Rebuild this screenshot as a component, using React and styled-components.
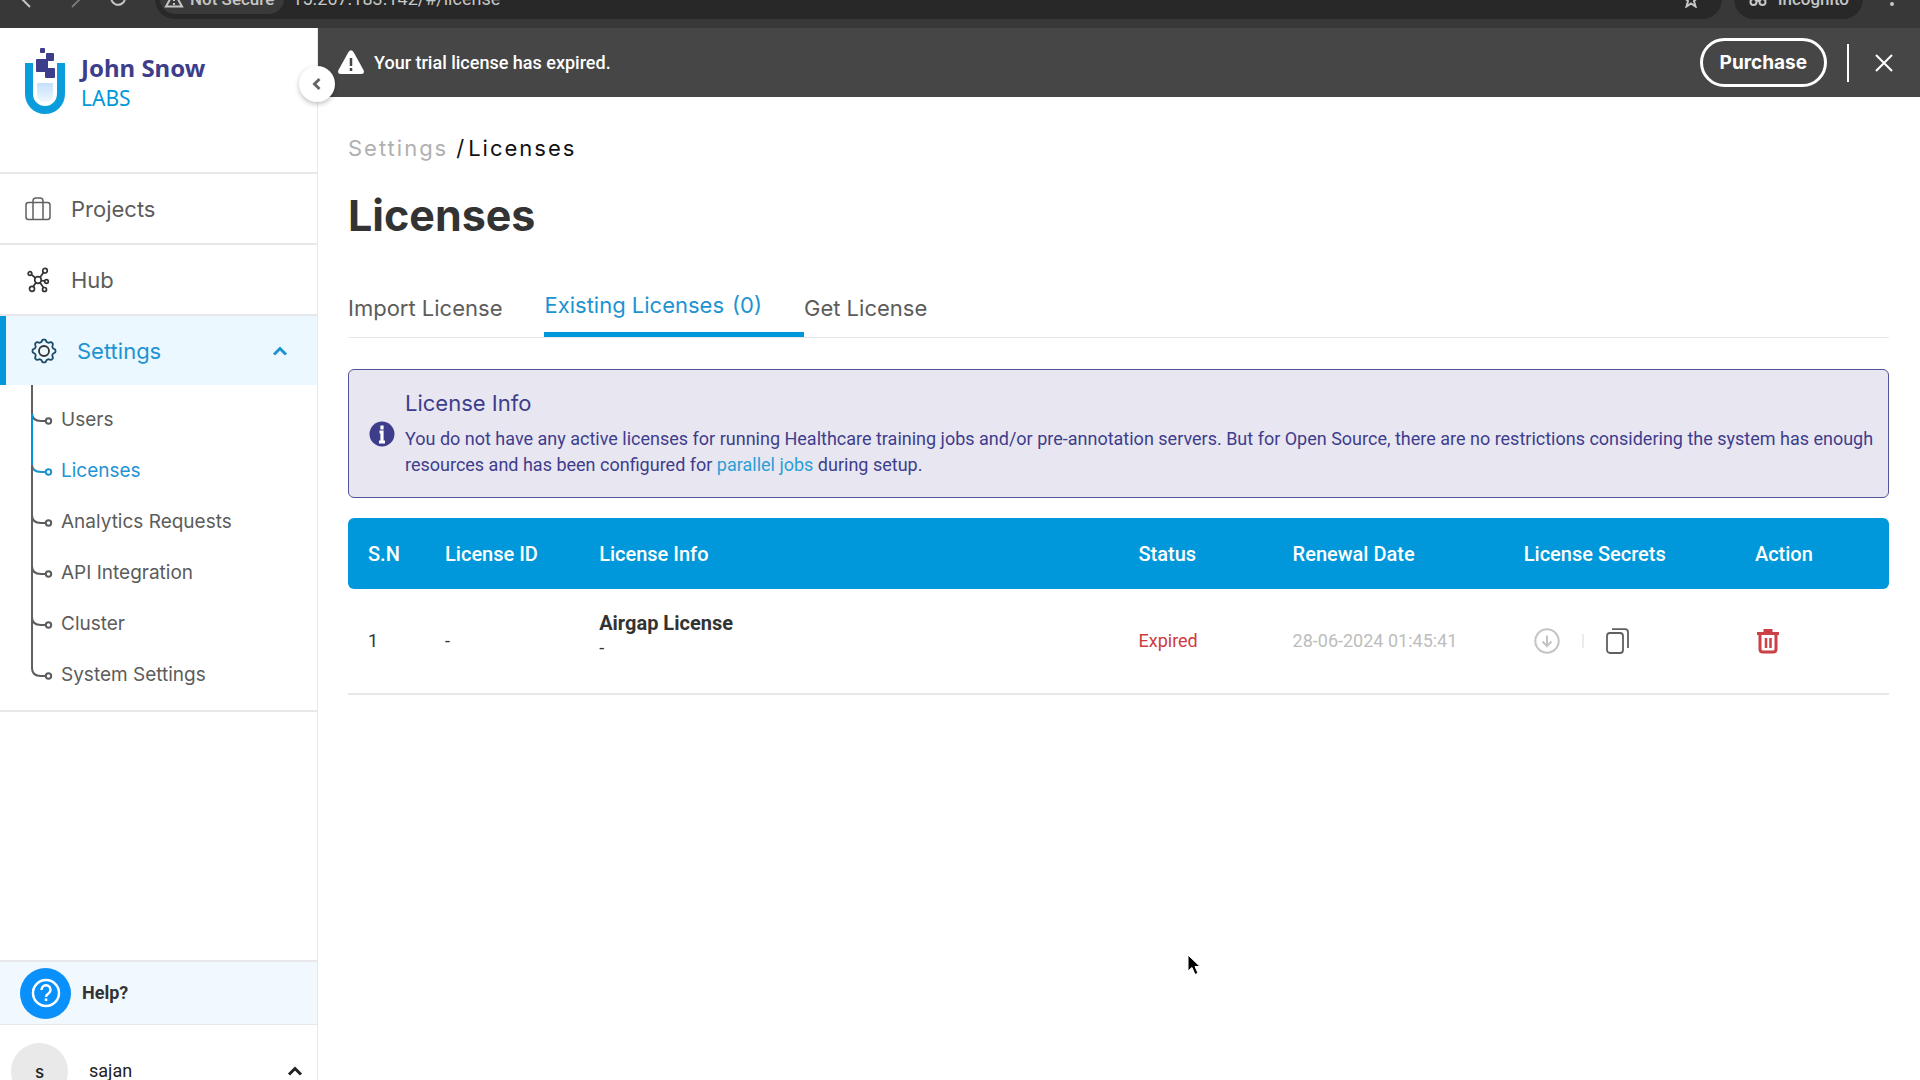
import React from "react";
import styled, { createGlobalStyle } from "styled-components";

const heading = `Inter, "Open Sans", sans-serif`;
const body = `Roboto, "Liberation Sans", sans-serif`;
const blue = "#0098da";
const line = "#e8e8ea";
const grey = "#5c5c5c";
const indigo = "#3e3d8c";

const GlobalStyle = createGlobalStyle`
  *, *::before, *::after { box-sizing: border-box; }
  html, body, #root { height: 100%; }
  body { margin: 0; overflow: hidden; background: #fff; color: #333; font: 18px/24px ${body}; }
  button { font: inherit; color: inherit; background: none; border: 0; padding: 0; cursor: pointer; }
  a { color: inherit; text-decoration: none; }
  ul { list-style: none; margin: 0; padding: 0; }
  h1, h2, p { margin: 0; }
  svg { display: block; flex: none; }
`;

const Page = styled.div`
  height: 100vh;
  display: flex;
  flex-direction: column;
  overflow: hidden;
`;

/* browser toolbar, partly scrolled out of view */
const BrowserBar = styled.div`
  height: 28px;
  flex: none;
  display: flex;
  align-items: flex-end;
  gap: 12px;
  padding: 0 25px 9px 20px;
  background: #383838;
  color: #c6c6c6;
  overflow: hidden;
`;
const NavGlyphs = styled.div`
  display: flex;
  gap: 24px;
  width: 123px;
  height: 40px;
  align-items: center;
`;
const Pill = styled.div`
  display: flex;
  align-items: center;
  gap: 8px;
  height: 40px;
  padding: ${(p) => (p.$grow ? "0 22px 0 5px" : "0 14px 0 12px")};
  border-radius: 20px;
  background: #282828;
  font: 500 17px/24px ${body};
  flex: ${(p) => (p.$grow ? 1 : "none")};
`;
const Secure = styled.span`
  display: flex;
  align-items: center;
  gap: 6px;
  height: 30px;
  padding: 0 10px 0 4px;
  border-radius: 15px;
  background: #3a3a3a;
`;
const Url = styled.span`
  flex: 1;
  font: 400 18px/24px ${body};
`;

const Shell = styled.div`
  flex: 1;
  display: flex;
  min-height: 0;
`;

const Sidebar = styled.aside`
  position: relative;
  width: 318px;
  flex: none;
  display: flex;
  flex-direction: column;
  border-right: 1px solid ${line};
`;
const Brand = styled.a`
  display: flex;
  align-items: flex-start;
  gap: 13px;
  height: 146px;
  flex: none;
  padding: 20px 24px;
  border-bottom: 2px solid ${line};
`;
const BrandText = styled.span`
  display: flex;
  flex-direction: column;
  padding-top: 4px;
  color: ${blue};
  font: 400 21px/31px "Noto Sans", sans-serif;
  b { color: ${indigo}; font-size: 24px; font-weight: 700; }
`;
const Collapse = styled.button`
  position: absolute;
  z-index: 1;
  top: 38px;
  right: -18px;
  width: 36px;
  height: 36px;
  display: grid;
  place-items: center;
  border-radius: 50%;
  background: #fff;
  color: #666;
  box-shadow: 0 2px 5px rgba(0, 0, 0, 0.25);
`;
const NavItem = styled.a`
  display: flex;
  align-items: center;
  height: ${(p) => (p.$active ? 69 : 71)}px;
  gap: 20px;
  padding-left: 25px;
  padding-right: 29px;
  border-bottom: ${(p) => (p.$active ? 0 : `2px solid ${line}`)};
  border-left: ${(p) => (p.$active ? `6px solid ${blue}` : 0)};
  background: ${(p) => (p.$active ? "#ebf8ff" : "#fff")};
  color: ${(p) => (p.$active ? "#1e93d2" : grey)};
  font: 400 22px/24px ${heading};
  span { flex: 1; }
`;
const SubMenu = styled.ul`
  border-bottom: 2px solid ${line};
  padding-bottom: 19px;
`;
const SubItem = styled.li`
  display: flex;
  align-items: flex-end;
  height: 51px;
  padding-left: 30px;
  gap: 8px;
  color: ${(p) => (p.$active ? "#1e93d2" : grey)};
  font: 400 19px/24px ${heading};
  svg { overflow: visible; }
  a { padding-bottom: 4px; }
`;
const SideFoot = styled.div`
  margin-top: auto;
  flex: none;
`;
const Help = styled.a`
  display: flex;
  align-items: center;
  gap: 11px;
  height: 65px;
  padding-left: 20px;
  border-top: 2px solid ${line};
  border-bottom: 1px solid ${line};
  background: #f1f9ff;
  font-weight: 700;
`;
const HelpBadge = styled.span`
  width: 51px;
  height: 51px;
  display: grid;
  place-items: center;
  border-radius: 50%;
  background: #0a90fa;
  color: #fff;
`;
const User = styled.button`
  display: flex;
  align-items: flex-start;
  width: 100%;
  height: 55px;
  padding: 18px 14px 0 11px;
  overflow: hidden;
  color: #222;
  text-align: left;
`;
const Avatar = styled.span`
  flex: none;
  width: 57px;
  height: 57px;
  margin-right: 21px;
  border-radius: 50%;
  background: #e9e9e9;
  font: 500 17px/58px ${heading};
  text-align: center;
`;
const UserName = styled.span`
  flex: 1;
  padding-top: 16px;
`;
const UserCaret = styled.span`
  padding-top: 20px;
`;

const Main = styled.main`
  flex: 1;
  min-width: 0;
`;
const Banner = styled.div`
  display: flex;
  align-items: center;
  height: 69px;
  padding: 0 21px 0 19px;
  gap: 9px;
  background: #464646;
  color: #fff;
  font-weight: 500;
  p { flex: 1; }
`;
const Purchase = styled.button`
  height: 49px;
  padding: 0 17px;
  border: 3px solid #fff;
  border-radius: 25px;
  font: 700 19px/24px ${heading};
`;
const Rule = styled.span`
  width: 2px;
  height: ${(p) => p.$h}px;
  background: ${(p) => p.$c};
`;
const BannerEnd = styled.div`
  display: flex;
  align-items: center;
  gap: 20px;
`;
const Close = styled.button`
  padding: 5px;
`;

const Content = styled.div`
  padding: 37px 31px 0 30px;
`;
const Crumbs = styled.nav`
  display: flex;
  gap: 2px;
  color: #111;
  font: 400 22px/28px ${heading};
  letter-spacing: 2px;
  a { color: #b0b0b0; padding-right: 6px; }
`;
const Title = styled.h1`
  margin-top: 27px;
  font: 700 43px/52px ${heading};
`;
const Tabs = styled.div`
  display: flex;
  height: 60px;
  margin-top: 37px;
  border-bottom: 1px solid ${line};
`;
const Tab = styled.button`
  height: 59px;
  padding: 0 42px 0 0;
  color: ${(p) => (p.$active ? "#1e93d2" : grey)};
  border-bottom: ${(p) => (p.$active ? `5px solid ${blue}` : 0)};
  font: 400 22px/24px ${heading};
`;
const Count = styled.span`
  margin-left: 8px;
`;
const Notice = styled.section`
  display: flex;
  align-items: center;
  gap: 10px;
  margin-top: 31px;
  height: 129px;
  padding: 0 8px 0 20px;
  border: 1px solid #53529a;
  border-radius: 6px;
  background: #e8e6f1;
  color: ${indigo};
  line-height: 26px;
  h2 { font: 400 22px/26px ${heading}; margin-bottom: 10px; }
  a { color: #2a9fd6; }
`;
const Table = styled.table`
  width: 100%;
  margin-top: 20px;
  table-layout: fixed;
  border-spacing: 0;
  th, td { padding: 0 0 0 20px; text-align: left; white-space: nowrap; }
  th { height: 71px; background: ${blue}; color: #fff; font-weight: 500; font-size: 20px; }
  th:first-child { border-radius: 6px 0 0 6px; }
  th:last-child { border-radius: 0 6px 6px 0; }
  td { height: 106px; border-bottom: 2px solid ${line}; }
  button { display: block; }
`;
const LicenseCell = styled.div`
  padding-bottom: 13px;
`;
const LicenseName = styled.div`
  font: 700 20px/26px ${body};
`;
const Status = styled.span`
  color: #cf3a40;
`;
const Faded = styled.span`
  color: #bdbdbd;
`;
const Secrets = styled.div`
  display: flex;
  align-items: center;
  gap: 22px;
  padding-left: 10px;
`;

const Cursor = styled.svg`
  position: absolute;
  left: 1187px;
  top: 954px;
`;

const Chevron = ({ size = 16, up }) => (
  <svg width={size} height={size} viewBox="0 0 16 16" fill="none" stroke="currentColor" strokeWidth="3">
    <path d={up ? "M2 11.5 8 5.5l6 6" : "M10.5 3 5.5 8l5 5"} />
  </svg>
);

const Logo = () => (
  <svg width="44" height="70" viewBox="0 0 44 70">
    <defs>
      <linearGradient id="liquid" x1="0" x2="0" y1="0" y2="1">
        <stop offset="0" stopColor="#c5e0fb" />
        <stop offset="1" stopColor="#eef7fe" />
      </linearGradient>
    </defs>
    <path d="M1 15h8v31a12 12 0 0 0 24 0V15h8v31a20 20 0 0 1-40 0z" fill="#0b9ddb" />
    <path d="M13 35h16v11q0 8-8 8t-8-8z" fill="url(#liquid)" />
    <rect x="16" y="0" width="5" height="5" rx="1" fill={indigo} />
    <rect x="22" y="5" width="8" height="8" rx="1" fill={indigo} />
    <rect x="12" y="11" width="12" height="13" rx="1" fill={indigo} />
    <rect x="21" y="20" width="10" height="10" rx="1" fill={indigo} />
  </svg>
);

const Briefcase = () => (
  <svg width="26" height="24" viewBox="0 0 26 24" fill="none" stroke="#606060" strokeWidth="1.500">
    <rect x="1" y="5.500" width="24" height="17" rx="2.500" />
    <path d="M8 22.500V4q0-3 3-3h4q3 0 3 3v18.500" />
  </svg>
);

const HubIcon = () => (
  <svg width="26" height="26" viewBox="0 0 26 26" fill="none" stroke="#333" strokeWidth="1.700">
    <circle cx="13" cy="13" r="3.300" />
    <circle cx="5" cy="6.500" r="1.800" />
    <circle cx="20" cy="3.700" r="2.300" />
    <circle cx="21.500" cy="14.500" r="1.800" />
    <circle cx="7" cy="21.800" r="2.500" />
    <circle cx="19.500" cy="22.500" r="2" />
    <path d="m10.500 11-4-3.300M15 10.500l3.500-5M16.300 13.500l3.400.7M11 15.600l-2.700 4M15 15.600l3.400 5" />
  </svg>
);

const gearPath = (() => {
  const pts = [];
  for (let i = 0; i <= 96; i++) {
    const a = (i / 96) * Math.PI * 2;
    const r = 10.4 + 1.1 * Math.tanh(2.2 * Math.cos(8 * a));
    pts.push(`${(13 + r * Math.cos(a)).toFixed(2)} ${(13 + r * Math.sin(a)).toFixed(2)}`);
  }
  return `M${pts.join("L")}z`;
})();
const Gear = () => (
  <svg width="26" height="26" viewBox="0 0 26 26" fill="none" stroke="#1d4a68" strokeWidth="1.800">
    <path d={gearPath} strokeLinejoin="round" />
    <circle cx="13" cy="13" r="5" stroke="#333" />
  </svg>
);

const Branch = ({ active, first }) => (
  <svg width="23" height="51" viewBox="0 0 23 51" fill="none" stroke="currentColor" strokeWidth="2">
    <path d={first ? "M2 0V29" : "M2 -22V29"} stroke={active ? blue : "#606060"} />
    <path d="M2 28q0 8 9 8h4" />
    <circle cx="18.500" cy="36" r="2.700" />
  </svg>
);

const subItems = ["Users", "Licenses", "Analytics Requests", "API Integration", "Cluster", "System Settings"];

export default function App() {
  return (
    <Page>
      <GlobalStyle />
      <BrowserBar>
        <NavGlyphs>
          <svg width="20" height="20" viewBox="0 0 20 20" fill="none" stroke="currentColor" strokeWidth="2"><path d="M10 2 2 10l8 8" /></svg>
          <svg width="20" height="20" viewBox="0 0 20 20" fill="none" stroke="#777" strokeWidth="2"><path d="m8 2 8 8-8 8" /></svg>
          <svg width="20" height="20" viewBox="0 0 20 20" fill="none" stroke="currentColor" strokeWidth="2"><path d="M16 5a7 7 0 1 0 1 5" /></svg>
        </NavGlyphs>
        <Pill $grow>
          <Secure>
            <svg width="20" height="18" viewBox="0 0 20 18" fill="none" stroke="currentColor" strokeWidth="2"><path d="M10 2 2 16.500h16zM10 7v4M10 13v2" /></svg>
            Not Secure
          </Secure>
          <Url>15.207.183.142/#/license</Url>
          <svg width="18" height="18" viewBox="0 0 18 18" fill="none" stroke="currentColor" strokeWidth="2"><path d="m9 2 2 5 5 .5-4 3.500 1.500 5.500L9 13.500l-4.500 3L6 11 2 7.500 7 7z" /></svg>
        </Pill>
        <Pill>
          <svg width="24" height="18" viewBox="2 0 24 18" fill="none" stroke="currentColor" strokeWidth="2"><circle cx="9.500" cy="12" r="3" /><circle cx="18.500" cy="12" r="3" /><path d="M5 6h18M12 11h4" /></svg>
          Incognito
        </Pill>
        <svg width="20" height="24" viewBox="0 0 20 24" fill="currentColor"><circle cx="17" cy="9" r="2" /></svg>
      </BrowserBar>

      <Shell>
        <Sidebar>
          <Brand href="#/">
            <Logo />
            <BrandText><b>John Snow</b>LABS</BrandText>
          </Brand>
          <Collapse aria-label="Collapse sidebar"><Chevron /></Collapse>
          <nav>
            <NavItem href="#/projects"><Briefcase /><span>Projects</span></NavItem>
            <NavItem href="#/hub"><HubIcon /><span>Hub</span></NavItem>
            <NavItem href="#/settings" $active><Gear /><span>Settings</span><Chevron up /></NavItem>
            <SubMenu>
              {subItems.map((name, i) => (
                <SubItem key={name} $active={i === 1}>
                  <Branch active={i === 1} first={i === 0} />
                  <a href={`#/${name.toLowerCase().replace(" ", "-")}`}>{name}</a>
                </SubItem>
              ))}
            </SubMenu>
          </nav>
          <SideFoot>
            <Help href="#/help">
              <HelpBadge>
                <svg width="30" height="30" viewBox="0 0 30 30" fill="none" stroke="currentColor" strokeWidth="2.500">
                  <circle cx="15" cy="15" r="13" />
                  <path d="M10.500 12a4.500 4.500 0 1 1 7 3.500c-1.500 1-2.500 1.500-2.500 3.500M15 20.500v2.500" />
                </svg>
              </HelpBadge>
              Help?
            </Help>
            <User>
              <Avatar>s</Avatar>
              <UserName>sajan</UserName>
              <UserCaret><Chevron up /></UserCaret>
            </User>
          </SideFoot>
        </Sidebar>

        <Main>
          <Banner role="alert">
            <svg width="28" height="25" viewBox="0 0 28 25"><path d="M11.500 2q2.500-3.500 5 0l10 18q1.500 4-2 4h-21q-3.500 0-2-4z" fill="#fff" /><path d="M14 8v8M14 18v3" stroke="#464646" strokeWidth="2.500" /></svg>
            <p>Your trial license has expired.</p>
            <BannerEnd>
              <Purchase>Purchase</Purchase>
              <Rule $h={38} $c="#fff" />
              <Close aria-label="Close">
                <svg width="20" height="20" viewBox="0 0 20 20" stroke="#fff" strokeWidth="2"><path d="m2 2 16 16M18 2 2 18" /></svg>
              </Close>
            </BannerEnd>
          </Banner>
          <Content>
            <Crumbs><a href="#/settings">Settings</a><span>/</span><span>Licenses</span></Crumbs>
            <Title>Licenses</Title>
            <Tabs role="tablist">
              <Tab role="tab">Import License</Tab>
              <Tab role="tab" $active aria-selected="true">Existing Licenses<Count>(0)</Count></Tab>
              <Tab role="tab">Get License</Tab>
            </Tabs>
            <Notice>
              <svg width="26" height="26" viewBox="0 0 26 26"><circle cx="13" cy="13" r="12.500" fill={indigo} /><path d="M13 4.500v4M10.500 11H13v10M10 21h6" stroke="#fff" strokeWidth="3.200" fill="none" /></svg>
              <div>
                <h2>License Info</h2>
                <p>
                  You do not have any active licenses for running Healthcare training jobs and/or pre-annotation servers. But for Open Source, there are no restrictions considering the system has enough resources and has been configured for <a href="#/parallel">parallel jobs</a> during setup.
                </p>
              </div>
            </Notice>
            <Table>
              <colgroup>
                {[5, 10, 35, 10, 15, 15, 10].map((w, i) => <col key={i} width={`${w}%`} />)}
              </colgroup>
              <thead>
                <tr>
                  {["S.N", "License ID", "License Info", "Status", "Renewal Date", "License Secrets", "Action"].map((t) => <th key={t}>{t}</th>)}
                </tr>
              </thead>
              <tbody>
                <tr>
                  <td>1</td>
                  <td>-</td>
                  <td><LicenseCell><LicenseName>Airgap License</LicenseName>-</LicenseCell></td>
                  <td><Status>Expired</Status></td>
                  <td><Faded>28-06-2024 01:45:41</Faded></td>
                  <td>
                    <Secrets>
                      <button aria-label="Download">
                        <svg width="26" height="26" viewBox="0 0 26 26" fill="none" stroke="#c4c4c4" strokeWidth="2"><circle cx="13" cy="13" r="11.700" /><path d="M13 7.500v10.500M8.500 13.500 13 18l4.500-4.500" /></svg>
                      </button>
                      <Rule $h={14} $c="#ececec" />
                      <button aria-label="Copy">
                        <svg width="24" height="26" viewBox="0 0 24 26" fill="none" stroke="#606060" strokeWidth="1.800"><rect x="1" y="5" width="16" height="20" rx="3" /><path d="M6 1.200h13q3 0 3 3V20" /></svg>
                      </button>
                    </Secrets>
                  </td>
                  <td>
                    <button aria-label="Delete">
                      <svg width="26" height="26" viewBox="0 0 26 26" fill="none" stroke="#cb4146" strokeWidth="3"><path d="M2 5.500h22M8.500 2.500h9M5 6v15q0 3 3 3h10q3 0 3-3V6" /><path d="M11 10v10M15.500 10v10" strokeWidth="2.500" /></svg>
                    </button>
                  </td>
                </tr>
              </tbody>
            </Table>
          </Content>
        </Main>
      </Shell>
      <Cursor width="14" height="22" viewBox="0 0 14 22"><path d="M1 1v16l4-3.500 3 7 3-1.300-3-6.700h5z" fill="#000" stroke="#fff" /></Cursor>
    </Page>
  );
}
